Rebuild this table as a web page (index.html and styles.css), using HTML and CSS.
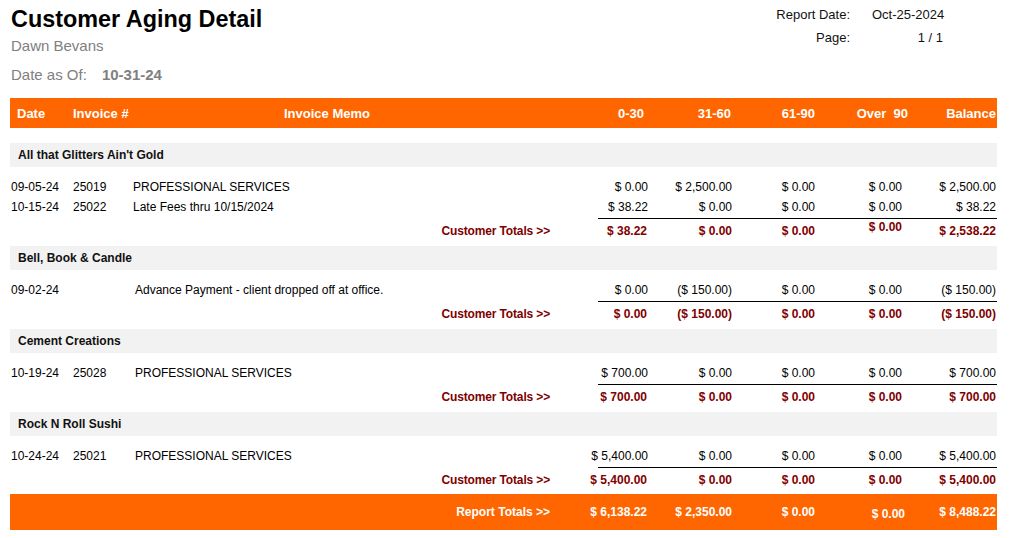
FILE: index.html
```html
<!DOCTYPE html>
<html lang="en">
<head>
<meta charset="utf-8">
<title>Customer Aging Detail</title>
<link rel="stylesheet" href="styles.css">
</head>
<body>
<div class="page">
  <header class="top">
    <div class="title-block">
      <h1 class="title">Customer Aging Detail</h1>
      <div class="owner">Dawn Bevans</div>
      <div class="asof"><span>Date as Of:</span><strong class="asof-value">10-31-24</strong></div>
    </div>
    <div class="meta">
      <div class="meta-label">Report Date:</div>
      <div class="meta-value">Oct-25-2024</div>
      <div class="meta-label">Page:</div>
      <div class="meta-value page-num">1 / 1</div>
    </div>
  </header>

  <div class="report">
    <div class="row head">
      <div class="c-date">Date</div>
      <div class="c-inv">Invoice #</div>
      <div class="c-memo">Invoice Memo</div>
      <div class="amt a1">0-30</div>
      <div class="amt a2">31-60</div>
      <div class="amt a3">61-90</div>
      <div class="amt a4"><span class="shift">Over&nbsp; 90</span></div>
      <div class="amt a5">Balance</div>
    </div>

    <section class="group">
      <div class="group-name">All that Glitters Ain't Gold</div>
      <div class="items">
        <div class="row item">
          <div class="c-date">09-05-24</div>
          <div class="c-inv">25019</div>
          <div class="c-memo">PROFESSIONAL SERVICES</div>
          <div class="amt a1">$ 0.00</div>
          <div class="amt a2">$ 2,500.00</div>
          <div class="amt a3">$ 0.00</div>
          <div class="amt a4">$ 0.00</div>
          <div class="amt a5">$ 2,500.00</div>
        </div>
        <div class="row item">
          <div class="c-date">10-15-24</div>
          <div class="c-inv">25022</div>
          <div class="c-memo">Late Fees thru 10/15/2024</div>
          <div class="amt a1">$ 38.22</div>
          <div class="amt a2">$ 0.00</div>
          <div class="amt a3">$ 0.00</div>
          <div class="amt a4">$ 0.00</div>
          <div class="amt a5">$ 38.22</div>
        </div>
      </div>
      <div class="row total">
        <div class="c-label">Customer Totals &gt;&gt;</div>
        <div class="amt a1">$ 38.22</div>
        <div class="amt a2">$ 0.00</div>
        <div class="amt a3">$ 0.00</div>
        <div class="amt a4 raised">$ 0.00</div>
        <div class="amt a5">$ 2,538.22</div>
      </div>
    </section>

    <section class="group">
      <div class="group-name">Bell, Book &amp; Candle</div>
      <div class="items">
        <div class="row item">
          <div class="c-date">09-02-24</div>
          <div class="c-inv"></div>
          <div class="c-memo memo-in">Advance Payment - client dropped off at office.</div>
          <div class="amt a1">$ 0.00</div>
          <div class="amt a2">($ 150.00)</div>
          <div class="amt a3">$ 0.00</div>
          <div class="amt a4">$ 0.00</div>
          <div class="amt a5">($ 150.00)</div>
        </div>
      </div>
      <div class="row total">
        <div class="c-label">Customer Totals &gt;&gt;</div>
        <div class="amt a1">$ 0.00</div>
        <div class="amt a2">($ 150.00)</div>
        <div class="amt a3">$ 0.00</div>
        <div class="amt a4">$ 0.00</div>
        <div class="amt a5">($ 150.00)</div>
      </div>
    </section>

    <section class="group">
      <div class="group-name">Cement Creations</div>
      <div class="items">
        <div class="row item">
          <div class="c-date">10-19-24</div>
          <div class="c-inv">25028</div>
          <div class="c-memo memo-in">PROFESSIONAL SERVICES</div>
          <div class="amt a1">$ 700.00</div>
          <div class="amt a2">$ 0.00</div>
          <div class="amt a3">$ 0.00</div>
          <div class="amt a4">$ 0.00</div>
          <div class="amt a5">$ 700.00</div>
        </div>
      </div>
      <div class="row total">
        <div class="c-label">Customer Totals &gt;&gt;</div>
        <div class="amt a1">$ 700.00</div>
        <div class="amt a2">$ 0.00</div>
        <div class="amt a3">$ 0.00</div>
        <div class="amt a4">$ 0.00</div>
        <div class="amt a5">$ 700.00</div>
      </div>
    </section>

    <section class="group">
      <div class="group-name">Rock N Roll Sushi</div>
      <div class="items">
        <div class="row item">
          <div class="c-date">10-24-24</div>
          <div class="c-inv">25021</div>
          <div class="c-memo memo-in">PROFESSIONAL SERVICES</div>
          <div class="amt a1">$ 5,400.00</div>
          <div class="amt a2">$ 0.00</div>
          <div class="amt a3">$ 0.00</div>
          <div class="amt a4">$ 0.00</div>
          <div class="amt a5">$ 5,400.00</div>
        </div>
      </div>
      <div class="row total">
        <div class="c-label">Customer Totals &gt;&gt;</div>
        <div class="amt a1">$ 5,400.00</div>
        <div class="amt a2">$ 0.00</div>
        <div class="amt a3">$ 0.00</div>
        <div class="amt a4">$ 0.00</div>
        <div class="amt a5">$ 5,400.00</div>
      </div>
    </section>

    <div class="row grand">
      <div class="c-label">Report Totals &gt;&gt;</div>
      <div class="amt a1">$ 6,138.22</div>
      <div class="amt a2">$ 2,350.00</div>
      <div class="amt a3">$ 0.00</div>
      <div class="amt a4 g4">$ 0.00</div>
      <div class="amt a5">$ 8,488.22</div>
    </div>
  </div>
</div>
</body>
</html>
```

FILE: styles.css
```css
* {
  box-sizing: border-box;
}

html, body {
  margin: 0;
  padding: 0;
  background: #ffffff;
}

body {
  font-family: "Liberation Sans", Arial, sans-serif;
  color: #000;
  font-size: 12px;
}

.page {
  width: 1009px;
  padding: 0 12px 0 10px;
}

/* ---------- top header ---------- */
.top {
  display: flex;
  justify-content: space-between;
  align-items: flex-start;
}

.title-block {
  padding-top: 6px;
  padding-left: 1px;
}

.title {
  margin: 0;
  font-size: 23.4px;
  line-height: 27px;
  font-weight: bold;
  color: #000;
}

.owner {
  margin-top: 4px;
  font-size: 15px;
  line-height: 18px;
  color: #808080;
}

.asof {
  margin-top: 11px;
  font-size: 15px;
  line-height: 18px;
  color: #808080;
}

.asof-value {
  margin-left: 15px;
  font-weight: bold;
}

.meta {
  display: grid;
  grid-template-columns: auto 75px;
  column-gap: 22px;
  margin-top: 3px;
  margin-right: 50px;
  font-size: 13px;
  line-height: 23px;
  color: #111;
}

.meta-label {
  text-align: right;
}

.page-num {
  text-align: right;
  padding-right: 4px;
}

/* ---------- report table ---------- */
.report {
  margin-top: 14px;
  width: 987px;
}

.row {
  display: grid;
  grid-template-columns: 62px 61px 465px 50px 84px 83px 87px 95px;
  align-items: center;
}

.row > div {
  min-width: 0;
  white-space: nowrap;
}

.amt {
  display: flex;
  justify-content: flex-end;
}

.head {
  height: 30px;
  background: #ff6600;
  color: #fff;
  font-weight: bold;
  font-size: 13px;
}

.head .c-date { padding-left: 7px; }
.head .c-inv { padding-left: 1px; }
.head .c-memo { padding-left: 151px; }
.head .a1 { padding-right: 4px; }
.head .a2 { padding-right: 1px; }
.head .a5 { padding-right: 1px; }
.head .shift { margin-right: -6px; }

.group {
  margin-top: 15px;
}

.group + .group {
  margin-top: 4px;
}

.group-name {
  height: 24px;
  line-height: 24px;
  background: #f2f2f2;
  padding-left: 8px;
  font-weight: bold;
  font-size: 12px;
  color: #111;
}

.items {
  padding-top: 10px;
  padding-bottom: 1px;
}

.item {
  height: 20px;
}

.item .c-date { padding-left: 1px; }
.item .c-inv { padding-left: 1px; }
.item .memo-in { padding-left: 2px; }
.item .a5 { padding-right: 1px; }

.total {
  height: 24px;
  color: #800000;
  font-weight: bold;
}

.total .c-label,
.grand .c-label {
  grid-column: 1 / 4;
  text-align: right;
  padding-right: 48px;
}

.total .c-label {
  letter-spacing: -0.15px;
  padding-top: 1px;
}

.total .amt {
  border-top: 1px solid #000;
  align-self: stretch;
  align-items: center;
}

.total .a1 { padding-right: 1px; }
.total .a5 { padding-right: 1px; }
.total .raised { padding-bottom: 7px; }

.grand {
  margin-top: 3px;
  height: 36px;
  background: #ff6600;
  color: #fff;
  font-weight: bold;
}

.grand .a1 { padding-right: 1px; }
.grand .a5 { padding-right: 1px; }
.grand .g4 { margin-right: -3px; padding-top: 3px; }
```
